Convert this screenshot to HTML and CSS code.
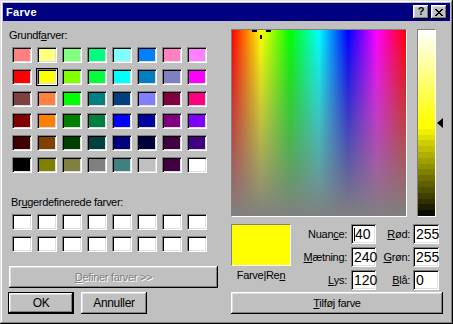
FILE: index.html
```html
<!DOCTYPE html>
<html>
<head>
<meta charset="utf-8">
<title>Farve</title>
<link rel="stylesheet" href="styles.css">
</head>
<body>
<div class="window">
  <div class="titlebar">
    <span class="title">Farve</span>
    <div class="caption-btns">
      <div class="cbtn help">?</div>
      <div class="cbtn close">
        <svg width="8" height="7" viewBox="0 0 8 7" shape-rendering="crispEdges"><path fill="#000" d="M0 0h2v1H0zM6 0h2v1H6zM1 1h2v1H1zM5 1h2v1H5zM2 2h4v1H2zM3 3h2v1H3zM2 4h4v1H2zM1 5h2v1H1zM5 5h2v1H5zM0 6h2v1H0zM6 6h2v1H6z"/></svg>
      </div>
    </div>
  </div>
  <div class="body">
    <div class="left">
      <div class="lbl lbl-basic">Grundf<u>a</u>rver:</div>
      <div class="swatches basic">
        <div class="sw" style="background:#ff8080"></div>
        <div class="sw" style="background:#ffff80"></div>
        <div class="sw" style="background:#80ff80"></div>
        <div class="sw" style="background:#00ff80"></div>
        <div class="sw" style="background:#80ffff"></div>
        <div class="sw" style="background:#0080ff"></div>
        <div class="sw" style="background:#ff80c0"></div>
        <div class="sw" style="background:#ff80ff"></div>

        <div class="sw" style="background:#ff0000"></div>
        <div class="sw selected" style="background:#ffff00"></div>
        <div class="sw" style="background:#80ff00"></div>
        <div class="sw" style="background:#00ff40"></div>
        <div class="sw" style="background:#00ffff"></div>
        <div class="sw" style="background:#0080c0"></div>
        <div class="sw" style="background:#8080c0"></div>
        <div class="sw" style="background:#ff00ff"></div>

        <div class="sw" style="background:#804040"></div>
        <div class="sw" style="background:#ff8040"></div>
        <div class="sw" style="background:#00ff00"></div>
        <div class="sw" style="background:#008080"></div>
        <div class="sw" style="background:#004080"></div>
        <div class="sw" style="background:#8080ff"></div>
        <div class="sw" style="background:#800040"></div>
        <div class="sw" style="background:#ff0080"></div>

        <div class="sw" style="background:#800000"></div>
        <div class="sw" style="background:#ff8000"></div>
        <div class="sw" style="background:#008000"></div>
        <div class="sw" style="background:#008040"></div>
        <div class="sw" style="background:#0000ff"></div>
        <div class="sw" style="background:#0000a0"></div>
        <div class="sw" style="background:#800080"></div>
        <div class="sw" style="background:#8000ff"></div>

        <div class="sw" style="background:#400000"></div>
        <div class="sw" style="background:#804000"></div>
        <div class="sw" style="background:#004000"></div>
        <div class="sw" style="background:#004040"></div>
        <div class="sw" style="background:#000080"></div>
        <div class="sw" style="background:#000040"></div>
        <div class="sw" style="background:#400040"></div>
        <div class="sw" style="background:#400080"></div>

        <div class="sw" style="background:#000000"></div>
        <div class="sw" style="background:#808000"></div>
        <div class="sw" style="background:#808040"></div>
        <div class="sw" style="background:#808080"></div>
        <div class="sw" style="background:#408080"></div>
        <div class="sw" style="background:#c0c0c0"></div>
        <div class="sw" style="background:#400040"></div>
        <div class="sw" style="background:#ffffff"></div>
      </div>
      <div class="lbl lbl-custom">Br<u>u</u>gerdefinerede farver:</div>
      <div class="swatches custom">
        <div class="sw"></div><div class="sw"></div><div class="sw"></div><div class="sw"></div>
        <div class="sw"></div><div class="sw"></div><div class="sw"></div><div class="sw"></div>
        <div class="sw"></div><div class="sw"></div><div class="sw"></div><div class="sw"></div>
        <div class="sw"></div><div class="sw"></div><div class="sw"></div><div class="sw"></div>
      </div>
      <div class="btn btn-define disabled"><span><u>D</u>efiner farver &gt;&gt;</span></div>
      <div class="btnrow">
        <div class="btn btn-ok">OK</div>
        <div class="btn btn-cancel">Annuller</div>
      </div>
    </div>
    <div class="right">
      <div class="picker">
        <div class="spectrum">
          <div class="ch ch-l"></div>
          <div class="ch ch-r"></div>
          <div class="ch ch-b"></div>
        </div>
        <div class="lum"></div>
        <div class="arrow"></div>
      </div>
      <div class="mid">
        <div class="prevcol">
          <div class="preview"></div>
          <div class="prevlbl">Farve|Re<u>n</u></div>
        </div>
        <div class="fields">
          <div class="flbl w1">Nuan<u>c</u>e:</div>
          <div class="inp i1"><span class="caret"></span>40</div>
          <div class="flbl w2"><u>R</u>ød:</div>
          <div class="inp i2">255</div>

          <div class="flbl w1"><u>M</u>ætning:</div>
          <div class="inp i1">240</div>
          <div class="flbl w2"><u>G</u>røn:</div>
          <div class="inp i2">255</div>

          <div class="flbl w1"><u>L</u>ys:</div>
          <div class="inp i1">120</div>
          <div class="flbl w2"><u>B</u>lå:</div>
          <div class="inp i2">0</div>
        </div>
      </div>
      <div class="btn btn-add"><span><u>T</u>ilføj farve</span></div>
    </div>
  </div>
</div>
</body>
</html>
```

FILE: styles.css
```css
* {
  box-sizing: border-box;
  margin: 0;
  padding: 0;
}

html, body {
  margin: 0;
  background: #c0c0c0;
}

body {
  font-family: "Liberation Sans", Arial, sans-serif;
  font-size: 11px;
  color: #000;
}

.window {
  width: 453px;
  height: 324px;
  background: #c0c0c0;
  padding: 3px;
  box-shadow:
    inset -1px -1px #000,
    inset 1px 1px #dfdfdf,
    inset -2px -2px #808080,
    inset 2px 2px #fff;
}

.titlebar {
  height: 18px;
  background: #000080;
  display: flex;
  align-items: center;
  justify-content: space-between;
  padding: 0 3px 0 3px;
}

.title {
  color: #fff;
  font-weight: bold;
  font-size: 11px;
  letter-spacing: 0.3px;
  line-height: 13px;
}

.caption-btns {
  display: flex;
  gap: 2px;
}

.cbtn {
  width: 16px;
  height: 14px;
  background: #c0c0c0;
  box-shadow:
    inset -1px -1px #000,
    inset 1px 1px #fff,
    inset -2px -2px #808080,
    inset 2px 2px #dfdfdf;
  display: flex;
  align-items: center;
  justify-content: center;
}

.cbtn.help {
  font-weight: bold;
  font-size: 11px;
  line-height: 11px;
  padding-bottom: 1px;
}

.cbtn.close svg {
  display: block;
}

.body {
  display: flex;
  height: 300px;
}

.left {
  width: 210px;
  margin-left: 6px;
  display: flex;
  flex-direction: column;
}

.lbl {
  line-height: 13px;
  height: 13px;
  letter-spacing: -0.3px;
  white-space: nowrap;
}

.lbl-basic {
  margin-top: 8px;
}

.lbl-custom {
  margin-top: 23px;
  margin-left: 2px;
}

.swatches {
  display: grid;
  grid-template-columns: repeat(8, 20px);
  grid-auto-rows: 16px;
  column-gap: 5px;
  row-gap: 6px;
  margin-left: 3px;
  margin-top: 5px;
}

.sw {
  background: #fff;
  border-style: solid;
  border-width: 1px;
  border-color: #808080 #fff #fff #808080;
  box-shadow: inset 1px 1px #000, inset -1px -1px #dfdfdf;
}

.sw.selected {
  outline: 1px solid #000;
}

.btn {
  height: 22px;
  background: #c0c0c0;
  box-shadow:
    inset -1px -1px #000,
    inset 1px 1px #fff,
    inset -2px -2px #808080,
    inset 2px 2px #dfdfdf;
  display: flex;
  align-items: center;
  justify-content: center;
  letter-spacing: -0.3px;
  white-space: nowrap;
}

.btn-define {
  margin-top: 14px;
  width: 209px;
}

.disabled {
  color: #808080;
  text-shadow: 1px 1px 0 #fff;
}

.btnrow {
  display: flex;
  margin-top: 4px;
  margin-left: -1px;
  gap: 7px;
}

.btn-ok {
  width: 66px;
  border: 1px solid #000;
  font-size: 12px;
}

.btn-cancel {
  width: 66px;
  font-size: 12px;
}

.right {
  margin-left: 12px;
  margin-top: 8px;
  width: 212px;
  display: flex;
  flex-direction: column;
}

.picker {
  display: flex;
  height: 188px;
}

.spectrum {
  position: relative;
  width: 176px;
  height: 188px;
  border-style: solid;
  border-width: 1px;
  border-color: #808080 #fff #fff #808080;
  background:
    linear-gradient(to bottom, rgba(128,128,128,0), rgb(128,128,128)),
    linear-gradient(to right, #f00 0%, #ff0 16.67%, #0f0 33.33%, #0ff 50%, #00f 66.67%, #f0f 83.33%, #f00 100%);
}

.ch {
  position: absolute;
  background: #000;
}

.ch-l {
  left: 20px;
  top: 0;
  width: 5px;
  height: 2px;
}

.ch-r {
  left: 34px;
  top: 0;
  width: 5px;
  height: 2px;
}

.ch-b {
  left: 28px;
  top: 5px;
  width: 2px;
  height: 4px;
}

.lum {
  margin-left: 10px;
  width: 19px;
  height: 188px;
  border-style: solid;
  border-width: 1px;
  border-color: #808080 #fff #fff #808080;
  background: linear-gradient(to bottom,
    #ffffff 0%, #ffff00 50%,
    #ffff00 50%, #ffff00 53.125%,
    #efef00 53.125%, #efef00 56.25%,
    #dfdf00 56.25%, #dfdf00 59.375%,
    #cfcf00 59.375%, #cfcf00 62.5%,
    #bfbf00 62.5%, #bfbf00 65.625%,
    #afaf00 65.625%, #afaf00 68.75%,
    #9f9f00 68.75%, #9f9f00 71.875%,
    #8f8f00 71.875%, #8f8f00 75%,
    #7f7f00 75%, #7f7f00 78.125%,
    #6f6f00 78.125%, #6f6f00 81.25%,
    #5f5f00 81.25%, #5f5f00 84.375%,
    #4f4f00 84.375%, #4f4f00 87.5%,
    #3f3f00 87.5%, #3f3f00 90.625%,
    #2f2f00 90.625%, #2f2f00 93.75%,
    #1f1f00 93.75%, #1f1f00 96.875%,
    #0a0a00 96.875%, #0a0a00 100%);
}

.arrow {
  align-self: center;
  margin-left: 1px;
  width: 0;
  height: 0;
  border-top: 5px solid transparent;
  border-bottom: 5px solid transparent;
  border-right: 6px solid #000;
}

.mid {
  display: flex;
  margin-top: 7px;
}

.prevcol {
  width: 60px;
  display: flex;
  flex-direction: column;
}

.preview {
  width: 60px;
  height: 42px;
  background: #ff0;
  border-style: solid;
  border-width: 1px;
  border-color: #808080 #fff #fff #808080;
}

.prevlbl {
  margin-top: 3px;
  line-height: 13px;
  text-align: center;
  letter-spacing: -0.3px;
  white-space: nowrap;
}

.fields {
  display: grid;
  grid-template-columns: 60px 25px 37px 26px;
  grid-auto-rows: 20px;
  row-gap: 3px;
}

.flbl {
  display: flex;
  align-items: center;
  justify-content: flex-end;
  letter-spacing: -0.3px;
  white-space: nowrap;
}

.flbl.w1 {
  padding-right: 4px;
}

.flbl.w2 {
  padding-right: 3px;
}

.inp {
  background: #fff;
  box-shadow:
    inset 1px 1px #808080,
    inset -1px -1px #fff,
    inset 2px 2px #000,
    inset -2px -2px #dfdfdf;
  display: flex;
  align-items: center;
  padding-left: 3px;
  font-family: "Liberation Sans Narrow", "Liberation Sans", Arial, sans-serif;
  font-size: 14px;
  line-height: 16px;
}

.caret {
  display: inline-block;
  width: 1px;
  height: 13px;
  background: #000;
}

.btn-add {
  margin-top: 2px;
  width: 212px;
  font-size: 11px;
}
```
